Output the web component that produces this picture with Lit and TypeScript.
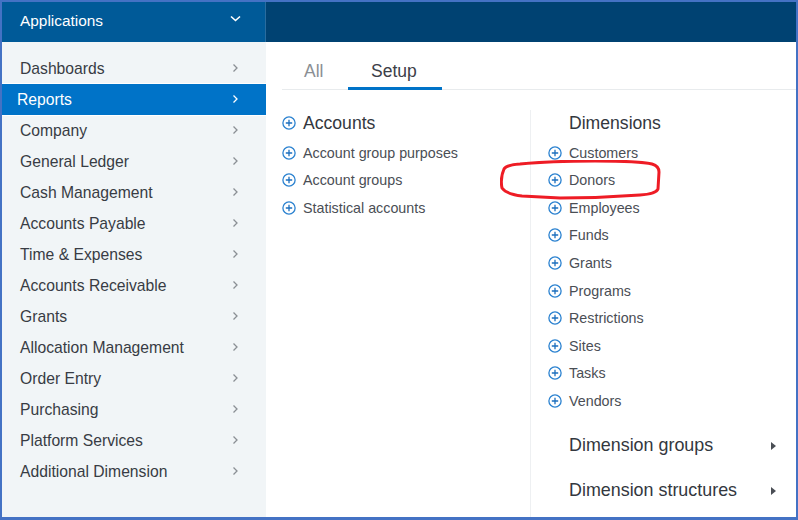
import { LitElement, html, css, svg } from "lit";
import { customElement } from "lit/decorators.js";

const MENU = [
  "Dashboards", "Reports", "Company", "General Ledger", "Cash Management",
  "Accounts Payable", "Time & Expenses", "Accounts Receivable", "Grants",
  "Allocation Management", "Order Entry", "Purchasing", "Platform Services",
  "Additional Dimension",
];
const ACCOUNTS = ["Account group purposes", "Account groups", "Statistical accounts"];
const DIMENSIONS = ["Customers", "Donors", "Employees", "Funds", "Grants", "Programs", "Restrictions", "Sites", "Tasks", "Vendors"];

const plus = svg`<svg class="plus" viewBox="0 0 14 14"><circle cx="7" cy="7" r="6.1" fill="none" stroke="#2b82d0" stroke-width="1.3"/><path d="M3.8 7h6.4M7 3.8v6.4" stroke="#1c6fbe" stroke-width="1.3"/></svg>`;
const chevron = svg`<svg class="chev" viewBox="0 0 8 10"><path d="M2.5 1.5l3.5 3.5-3.5 3.5" fill="none" stroke="currentColor" stroke-width="1.3"/></svg>`;

@customElement("app-root")
export class AppRoot extends LitElement {
  static styles = css`
    :host {
      display: block;
      position: relative;
      width: 798px;
      height: 520px;
      box-sizing: border-box;
      border: solid #4472c4;
      border-width: 2px 2px 3px 2px;
      font-family: "Liberation Sans", Arial, sans-serif;
      color: #3c4048;
      background: #fff;
      overflow: hidden;
    }
    .top {
      display: flex;
      height: 40px;
    }
    .app {
      width: 264px;
      box-sizing: border-box;
      background: #005a98;
      color: #fff;
      font-size: 15.4px;
      display: flex;
      align-items: center;
      justify-content: space-between;
      padding: 0 24px 3px 18px;
      border-right: 1px solid #2a6c9e;
    }
    .app svg { width: 11px; height: 8px; margin-top: -3px; }
    .bar { flex: 1; background: #004272; }
    .body { display: flex; height: 475px; }
    .side {
      width: 264px;
      flex: none;
      background: #f1f5f7;
      padding-top: 11px;
      box-sizing: border-box;
    }
    .row {
      height: 31px;
      box-sizing: border-box;
      display: flex;
      align-items: center;
      justify-content: space-between;
      padding: 0 27px 0 18px;
      font-size: 15.7px;
      color: #383c44;
    }
    .row .chev { width: 8px; height: 10px; color: #8a8f94; margin-top: -2px; }
    .row.on {
      position: relative;
      background: #0073c8;
      color: #fff;
      padding-left: 15px;
      box-shadow: 0 0 0 1px #fff;
    }
    .row.on .chev { color: #fff; }
    .main { flex: 1; min-width: 0; }
    .tabs {
      display: flex;
      height: 48px;
      box-sizing: border-box;
      margin-left: 16px;
      padding-left: 22px;
      border-bottom: 1px solid #e8ebed;
      font-size: 17.5px;
    }
    .tab {
      padding-top: 19px;
      box-sizing: border-box;
      height: 48px;
      color: #8b8f94;
      width: 44px;
    }
    .tab.on {
      color: #3c4048;
      width: 94px;
      padding-left: 23px;
      border-bottom: 3px solid #0073c8;
    }
    .cols { display: flex; padding-top: 20px; }
    .col1 { width: 264px; padding-left: 16px; box-sizing: border-box; }
    .col2 {
      flex: 1;
      border-left: 1px solid #eef0f2;
      padding-left: 17px;
      height: 407px;
    }
    .head {
      display: flex;
      align-items: center;
      gap: 7px;
      font-size: 17.6px;
      height: 26px;
      margin-bottom: 3px;
      color: #33373e;
    }
    .head.plain { padding-left: 21px; }
    .item {
      display: flex;
      align-items: center;
      gap: 7px;
      font-size: 14.3px;
      height: 27.55px;
      color: #4a4e55;
    }
    .plus { width: 14px; height: 14px; flex: none; }
    .more {
      display: flex;
      align-items: center;
      justify-content: space-between;
      font-size: 17.9px;
      color: #33373e;
      height: 45px;
      padding: 0 20px 0 21px;
    }
    .more i {
      width: 0;
      height: 0;
      border-left: 5px solid #4a4e55;
      border-top: 4px solid transparent;
      border-bottom: 4px solid transparent;
    }
    .groups { padding-top: 9px; }
    .mark {
      position: absolute;
      left: 498px;
      top: 158px;
      width: 162px;
      height: 40px;
      pointer-events: none;
    }
  `;

  render() {
    return html`
      <div class="top">
        <div class="app">
          <span>Applications</span>
          <svg viewBox="0 0 11 8"><path d="M1 1.5l4.5 4 4.5-4" fill="none" stroke="#fff" stroke-width="1.6"/></svg>
        </div>
        <div class="bar"></div>
      </div>
      <div class="body">
        <nav class="side">
          ${MENU.map((m) => html`<div class="row ${m === "Reports" ? "on" : ""}"><span>${m}</span>${chevron}</div>`)}
        </nav>
        <div class="main">
          <div class="tabs">
            <div class="tab">All</div>
            <div class="tab on">Setup</div>
          </div>
          <div class="cols">
            <div class="col1">
              <div class="head">${plus}<span>Accounts</span></div>
              ${ACCOUNTS.map((a) => html`<div class="item">${plus}<span>${a}</span></div>`)}
            </div>
            <div class="col2">
              <div class="head plain"><span>Dimensions</span></div>
              ${DIMENSIONS.map((d) => html`<div class="item">${plus}<span>${d}</span></div>`)}
              <div class="groups">
                <div class="more"><span>Dimension groups</span><i></i></div>
                <div class="more"><span>Dimension structures</span><i></i></div>
              </div>
            </div>
          </div>
        </div>
      </div>
      <svg class="mark" viewBox="0 0 162 40">
        <path d="M4 9 Q6 5 20 4 Q50 1 95 1 Q140 1 152 4 Q159 6 159 12 L158 29 Q156 34 140 35 Q100 38 60 38 L22 36 Q6 34 2 28 Q0 18 4 9Z" fill="none" stroke="#ee1c25" stroke-width="3"/>
      </svg>
    `;
  }
}
